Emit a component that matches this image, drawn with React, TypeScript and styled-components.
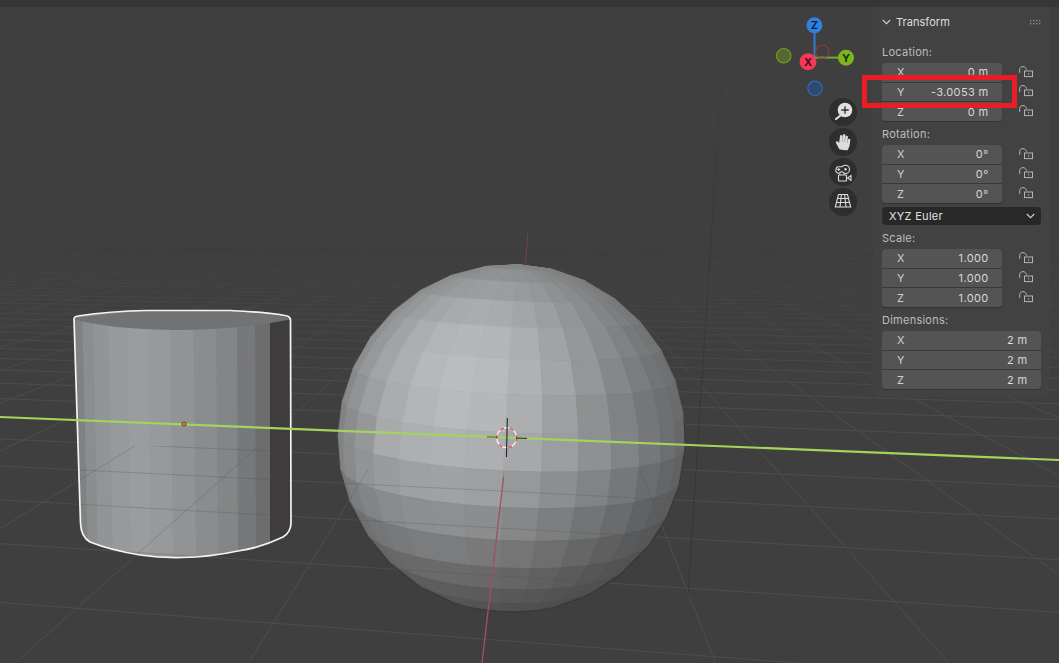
import styled, { createGlobalStyle } from "styled-components";
import { FaHandPaper } from "react-icons/fa";

const GlobalStyle = createGlobalStyle`
  html, body {
    margin: 0;
    padding: 0;
    background: #3f3f3f;
    overflow: hidden;
  }
`;

const Page = styled.div`
  width: 1059px;
  height: 663px;
  display: flex;
  flex-direction: column;
  font-family: "Inter", "Liberation Sans", sans-serif;
  font-size: 11px;
  color: #d8d8d8;
`;

const TopBar = styled.div`
  height: 7px;
  flex: none;
  background: #363636;
`;

const Viewport = styled.main`
  position: relative;
  flex: 1;
  overflow: hidden;
  background: #3f3f3f;
`;

const Scene = styled.svg`
  position: absolute;
  inset: 0;
  width: 100%;
  height: 100%;
`;

const GizmoSvg = styled.svg`
  position: absolute;
  left: 770px;
  top: 3px;
  width: 100px;
  height: 100px;
`;

const NavButtons = styled.div`
  position: absolute;
  left: 829px;
  top: 91px;
  display: flex;
  flex-direction: column;
  gap: 2px;
`;

const NavButton = styled.div`
  width: 28px;
  height: 28px;
  border-radius: 50%;
  background: #2e2e2e;
  color: #dcdcdc;
  display: flex;
  align-items: center;
  justify-content: center;
`;

const Panel = styled.aside`
  position: absolute;
  right: 9px;
  top: 0;
  width: 159px;
  padding: 6px 9px 8px;
  background: #424242;
  border-radius: 0 0 5px 5px;
`;

const PanelHeader = styled.header`
  height: 18px;
  display: flex;
  align-items: center;
  gap: 5px;
  margin-bottom: 12px;
  color: #dedede;
  letter-spacing: 0.05px;
`;

const HeaderTitle = styled.span`
  flex: 1;
`;

const SectionLabel = styled.div`
  height: 16px;
  line-height: 16px;
  padding-top: 1px;
  margin-bottom: 3px;
  color: #bdbdbd;
  letter-spacing: 0.25px;
`;

const Section = styled.section`
  margin-bottom: 4px;
  &:last-child {
    margin-bottom: 0;
  }
`;

const FieldRow = styled.div`
  display: flex;
`;

const Fields = styled.div<{ $wide?: boolean }>`
  width: ${({ $wide }) => ($wide ? "159px" : "120px")};
  height: 58px;
  flex: none;
  display: grid;
  grid-auto-rows: 1fr;
  gap: 1px;
  background: #383838;
  border-radius: 4px;
  overflow: hidden;
  box-shadow: 0 1px 1px #343434;
`;

const Field = styled.div`
  display: flex;
  align-items: center;
  justify-content: space-between;
  padding: 0 13.5px 0 15px;
  background: #545454;
  letter-spacing: 0.35px;
`;

const Axis = styled.span`
  color: #d0d0d0;
`;

const Locks = styled.div`
  display: grid;
  grid-auto-rows: 1fr;
  gap: 1px;
  padding-left: 17px;
  height: 58px;
  align-items: center;
`;

const LockIcon = styled.svg`
  display: block;
  width: 15px;
  height: 12px;
  margin-top: -1px;
  color: #b4b4b4;
`;

const Select = styled.div`
  height: 18px;
  margin-bottom: 4px;
  padding: 0 6px 0 7px;
  display: flex;
  align-items: center;
  justify-content: space-between;
  background: #282828;
  border-radius: 4px;
  color: #e2e2e2;
  letter-spacing: 0.3px;
`;

const hexByte = (v: number) =>
  Math.max(0, Math.min(255, Math.round(v)))
    .toString(16)
    .padStart(2, "0");

const grey = (i: number, tint = 0) =>
  "#" + hexByte(i * 255 - tint) + hexByte(i * 255 + tint * 0.4) + hexByte(i * 255 + tint);

// the floor: everything converges on two vanishing points found from the picture
const transverseY = (y0: number, x: number) => 200 + (y0 - 200) * (1 + x / 5300);

function FloorGrid({ stroke, opacity = 1, from = 0 }: { stroke: string; opacity?: number; from?: number }) {
  const rows = [];
  for (let n = -5; n < 52; n++) {
    const y0 = 200 + 1 / (0.00461 + 0.000425 * n);
    if (y0 < from) continue;
    const fade = Math.min(1, Math.max(0, (y0 - 245) / 130));
    rows.push(
      <line
        key={n}
        x1={0}
        y1={transverseY(y0, 0)}
        x2={1059}
        y2={transverseY(y0, 1059)}
        stroke={stroke}
        strokeOpacity={fade * opacity}
      />
    );
  }
  const cols = [];
  for (let k = -26; k <= 26; k++) {
    const x663 = 482 + 233.5 * k;
    const top = 240;
    const xAt = (y: number) => 535 + ((x663 - 535) * (y - 200)) / 463;
    cols.push(
      <line
        key={k}
        x1={xAt(top)}
        y1={top}
        x2={xAt(663)}
        y2={663}
        stroke={from ? stroke : "url(#floorFade)"}
        strokeOpacity={opacity}
      />
    );
  }
  return (
    <g strokeWidth={1}>
      {rows}
      {cols}
    </g>
  );
}

const rad = (d: number) => (d * Math.PI) / 180;

function buildSphere() {
  const D = 8;
  const f = 173.5 * Math.sqrt(D * D - 1);
  const pitch = rad(9.75);
  const roll = rad(2.4);
  const yaw = -2;
  const cx = 511.5;
  const cy = 438;
  const toView = (lat: number, lon: number) => {
    const a = rad(lat);
    const b = rad(lon + yaw);
    const x = Math.cos(a) * Math.sin(b);
    const y = Math.sin(a);
    const z = Math.cos(a) * Math.cos(b);
    const y1 = y * Math.cos(pitch) - z * Math.sin(pitch);
    const z1 = y * Math.sin(pitch) + z * Math.cos(pitch);
    return [x * Math.cos(roll) + y1 * Math.sin(roll), -x * Math.sin(roll) + y1 * Math.cos(roll), z1];
  };
  const faces: { points: string; fill: string }[] = [];
  for (let i = 0; i < 16; i++) {
    for (let j = 0; j < 32; j++) {
      const lat1 = 90 - i * 11.25;
      const lat2 = lat1 - 11.25;
      const lon1 = j * 11.25;
      const lon2 = lon1 + 11.25;
      const corners = [toView(lat1, lon1), toView(lat1, lon2), toView(lat2, lon2), toView(lat2, lon1)];
      const c = corners.reduce((s, p) => [s[0] + p[0] / 4, s[1] + p[1] / 4, s[2] + p[2] / 4], [0, 0, 0]);
      const len = Math.hypot(c[0], c[1], c[2]);
      const n = [c[0] / len, c[1] / len, c[2] / len];
      const facing = n[2] * D - (n[0] * c[0] + n[1] * c[1] + n[2] * c[2]);
      if (facing <= 0) continue;
      const spot = Math.max(0, n[0] * -0.22 + n[1] * 0.22 + n[2] * 0.95);
      const lift = n[1] > 0 ? 0.07 * n[1] : 0.13 * n[1];
      const glow = n[1] > 0 ? spot * spot * spot : spot * spot;
      const i0 = 0.44 + lift - 0.036 * n[0] + 0.27 * glow;
      const points = corners
        .map((p) => {
          const s = f / (D - p[2]);
          return `${(cx + p[0] * s).toFixed(1)},${(cy - p[1] * s).toFixed(1)}`;
        })
        .join(" ");
      faces.push({ points, fill: grey(i0, n[1] < -0.6 ? 0 : 1.5) });
    }
  }
  return faces;
}

const sphereFaces = buildSphere();

const cylinderOutline =
  "M74 319 Q74 316.5 78 316 Q110 311 147 310.5 L230 310.5 Q265 312 287 316 Q290.5 317 290.5 320 L291 523 Q291 532 283 537 Q260 548 238 551 Q210 557 182 557.5 Q160 558 140 555 Q110 550 90 542 Q81 537 80.5 523 Z";

const stripTop = [72, 82, 93, 108, 127, 148, 170, 193, 216, 237, 255, 270];
const stripBottom = [78, 88, 98, 113, 131, 151, 173, 196, 218, 238, 256, 270];
const stripFill = [
  "#7f8182", "#8b8d8e", "#929495", "#979a9b", "#9a9c9d", "#98999a",
  "#919394", "#8b8c8e", "#848586", "#77787a", "#6c6d6f", "#5d5e5f",
];

function SceneDrawing() {
  return (
    <Scene viewBox="0 7 1059 656">
      <defs>
        <linearGradient id="floorFade" gradientUnits="userSpaceOnUse" x1="0" y1="240" x2="0" y2="430">
          <stop offset="0" stopColor="#4d4d4d" stopOpacity="0" />
          <stop offset="1" stopColor="#4d4d4d" />
        </linearGradient>
        <linearGradient id="poleFade" gradientUnits="userSpaceOnUse" x1="0" y1="30" x2="0" y2="420">
          <stop offset="0" stopColor="#2f2f2f" stopOpacity="0.15" />
          <stop offset="1" stopColor="#2f2f2f" stopOpacity="0.8" />
        </linearGradient>
        <clipPath id="cylClip">
          <path d={cylinderOutline} />
        </clipPath>
        <clipPath id="lowerFloor">
          <rect x="0" y="446" width="1059" height="217" />
        </clipPath>
        <clipPath id="sphereClip">
          <circle cx="511.5" cy="438" r="172" />
        </clipPath>
        <clipPath id="sphereLower">
          <rect x="0" y="470" width="1059" height="193" />
        </clipPath>
      </defs>

      <FloorGrid stroke="#4d4d4d" />
      <line x1="688" y1="595" x2="724" y2="40" stroke="url(#poleFade)" strokeWidth="0.8" />
      <line x1="528" y1="233" x2="525" y2="267" stroke="#7a3d46" strokeWidth="1" />

      <circle cx="512" cy="439.5" r="173.5" fill="#3b3938" />
      {sphereFaces.map((face, i) => (
        <polygon key={i} points={face.points} fill={face.fill} stroke={face.fill} strokeWidth="0.8" />
      ))}
      <g clipPath="url(#sphereClip)">
        <g clipPath="url(#sphereLower)">
          <FloorGrid stroke="#505050" opacity={0.25} from={300} />
        </g>
      </g>
      <line x1="503.6" y1="477" x2="482" y2="663" stroke="#a5505e" strokeWidth="1.2" />

      <g clipPath="url(#cylClip)">
        {stripFill.map((fill, i) => (
          <polygon
            key={i}
            points={`${stripTop[i]},310 292,310 292,560 ${stripBottom[i]},560`}
            fill={fill}
          />
        ))}
        <polygon points="270,310 292,310 292,560 270,560" fill="#3e3c3d" />
        <g clipPath="url(#lowerFloor)">
          <FloorGrid stroke="#505050" opacity={0.28} from={300} />
        </g>
        <path
          d="M72 319 Q80 316 147 310.5 L230 310.5 Q285 315 292 319 Q240 330 172 330 Q110 329 72 319Z"
          fill="#707274"
        />
      </g>
      <path d={cylinderOutline} fill="none" stroke="#f4f4f4" strokeWidth="1.7" strokeLinejoin="round" />

      <line x1="0" y1="417" x2="1059" y2="460" stroke="#a3d45c" strokeWidth="2.2" />
      <circle cx="184" cy="424" r="2" fill="#e09a2c" stroke="#4d3a25" strokeWidth="1" />

      <circle cx="506.7" cy="437.7" r="10" fill="none" stroke="#f4f4f4" strokeWidth="1.2" />
      <circle cx="506.7" cy="437.7" r="10" fill="none" stroke="#e8414f" strokeWidth="1.2" strokeDasharray="4 6" />
      <g stroke="#1c1c1c" strokeWidth="1">
        <line x1="507.3" y1="418" x2="506.5" y2="457" />
        <line x1="487" y1="436.8" x2="498" y2="437.2" strokeOpacity="0.6" />
        <line x1="516" y1="438" x2="527" y2="438.4" />
      </g>
    </Scene>
  );
}

function Gizmo() {
  return (
    <GizmoSvg viewBox="770 10 100 100">
      <line x1="814.5" y1="25" x2="814.5" y2="57" stroke="#2f7bd6" strokeWidth="2" />
      <line x1="814" y1="57.6" x2="846" y2="57.6" stroke="#76ad1e" strokeWidth="2" />
      <circle cx="822.3" cy="51.7" r="6.7" fill="none" stroke="#8a3a48" strokeWidth="1.2" />
      <circle cx="783.7" cy="55.7" r="7.2" fill="#55682f" stroke="#6e9c22" strokeWidth="1.2" />
      <circle cx="815" cy="88.3" r="7.2" fill="#2f4a6e" stroke="#2f6cb8" strokeWidth="1.2" />
      <circle cx="814.4" cy="25.3" r="8" fill="#2f81e2" />
      <circle cx="846" cy="57.7" r="8" fill="#7db51e" />
      <circle cx="808" cy="61.7" r="8.5" fill="#f23a58" />
      <g fontFamily="Inter, sans-serif" fontSize="11" fontWeight="700" textAnchor="middle">
        <text x="814.4" y="29.3" fill="#10243c">Z</text>
        <text x="846" y="61.7" fill="#1f2d06">Y</text>
        <text x="808" y="65.7" fill="#4a0b18">X</text>
      </g>
    </GizmoSvg>
  );
}

const ZoomIcon = () => (
  <svg width="28" height="28" viewBox="0 0 28 28">
    <circle cx="16" cy="12" r="7.3" fill="#e0e0e0" />
    <path d="M12.3 12h7.4M16 8.3v7.4" stroke="#2e2e2e" strokeWidth="1.3" />
    <path d="M11.5 17.5L7 21" stroke="#e0e0e0" strokeWidth="2.2" strokeLinecap="round" />
  </svg>
);

const CameraIcon = () => (
  <svg width="28" height="28" viewBox="0 0 28 28" fill="none" stroke="#dcdcdc" strokeWidth="1.1">
    <path d="M7 11.5a2.8 2.8 0 0 1 2.8-2.8h2.6c1.2 0 1.6-1.4 4-1.4a4 4 0 0 1 0 8.2c-1.4 0-2-.9-3-1.7h-1.5c-1 .9-1.6 1.7-3 1.4A2.8 2.8 0 0 1 7 11.5z" />
    <circle cx="16.5" cy="11.3" r="1.2" fill="#dcdcdc" stroke="none" />
    <path d="M8.2 11.5h3M9.7 10v3" />
    <rect x="9.5" y="17" width="8" height="6" rx="0.6" />
    <path d="M22 17.6v4.8l-3.4-2.4z" />
    <path d="M11 15.5v1.5M15 15.5v1.5" />
  </svg>
);

const GridIcon = () => (
  <svg width="28" height="28" viewBox="0 0 28 28" fill="none" stroke="#dcdcdc" strokeWidth="1.1">
    <path d="M9.5 6.5h9l3.2 12.5H6.3z" />
    <path d="M8.4 10.5h11.2M7.4 14.5h13.2M12.4 6.5l-1.4 12.5M15.6 6.5l1.4 12.5" />
  </svg>
);

const Lock = () => (
  <LockIcon viewBox="0 0 15 12" fill="none" stroke="currentColor" strokeWidth="1">
    <path d="M0.7 6.8V3.4C0.7 1.6 2.2 0.6 4 0.6S7 1.8 7.6 3.8" />
    <rect x="5.5" y="5" width="8" height="5.6" />
    <rect x="9" y="7.3" width="1.3" height="1.1" fill="currentColor" stroke="none" />
  </LockIcon>
);

const Chevron = () => (
  <svg width="9" height="6" viewBox="0 0 9 6" fill="none" stroke="#cfcfcf" strokeWidth="1.2">
    <path d="M0.8 1l3.7 3.6L8.2 1" />
  </svg>
);

const Grip = () => (
  <svg width="11" height="5" viewBox="0 0 11 5" fill="#8c8c8c">
    {[0, 1, 2, 3].map((i) => (
      <g key={i}>
        <rect x={i * 3} y="0" width="1.4" height="1.4" />
        <rect x={i * 3} y="3" width="1.4" height="1.4" />
      </g>
    ))}
  </svg>
);

const Highlight = styled.div`
  position: absolute;
  left: 862px;
  top: 68px;
  width: 145px;
  height: 23px;
  border: 5px solid #ed1c24;
`;

interface GroupData {
  label: string;
  values: [string, string, string];
  locked?: boolean;
}

const AXES = ["X", "Y", "Z"];

function TransformGroup({ group }: { group: GroupData }) {
  return (
    <Section>
      <SectionLabel>{group.label}</SectionLabel>
      <FieldRow>
        <Fields $wide={!group.locked}>
          {group.values.map((value, i) => (
            <Field key={AXES[i]}>
              <Axis>{AXES[i]}</Axis>
              <span>{value}</span>
            </Field>
          ))}
        </Fields>
        {group.locked && (
          <Locks>
            <Lock />
            <Lock />
            <Lock />
          </Locks>
        )}
      </FieldRow>
    </Section>
  );
}

const location: GroupData = { label: "Location:", values: ["0 m", "-3.0053 m", "0 m"], locked: true };
const rotation: GroupData = { label: "Rotation:", values: ["0°", "0°", "0°"], locked: true };
const scale: GroupData = { label: "Scale:", values: ["1.000", "1.000", "1.000"], locked: true };
const dimensions: GroupData = { label: "Dimensions:", values: ["2 m", "2 m", "2 m"] };

export default function App() {
  return (
    <Page>
      <GlobalStyle />
      <TopBar />
      <Viewport>
        <SceneDrawing />
        <Gizmo />
        <NavButtons>
          <NavButton>
            <ZoomIcon />
          </NavButton>
          <NavButton>
            <FaHandPaper size={16} style={{ transform: "rotate(8deg)" }} />
          </NavButton>
          <NavButton>
            <CameraIcon />
          </NavButton>
          <NavButton>
            <GridIcon />
          </NavButton>
        </NavButtons>
        <Panel>
          <PanelHeader>
            <Chevron />
            <HeaderTitle>Transform</HeaderTitle>
            <Grip />
          </PanelHeader>
          <TransformGroup group={location} />
          <TransformGroup group={rotation} />
          <Select>
            XYZ Euler
            <Chevron />
          </Select>
          <TransformGroup group={scale} />
          <TransformGroup group={dimensions} />
        </Panel>
        <Highlight />
      </Viewport>
    </Page>
  );
}
